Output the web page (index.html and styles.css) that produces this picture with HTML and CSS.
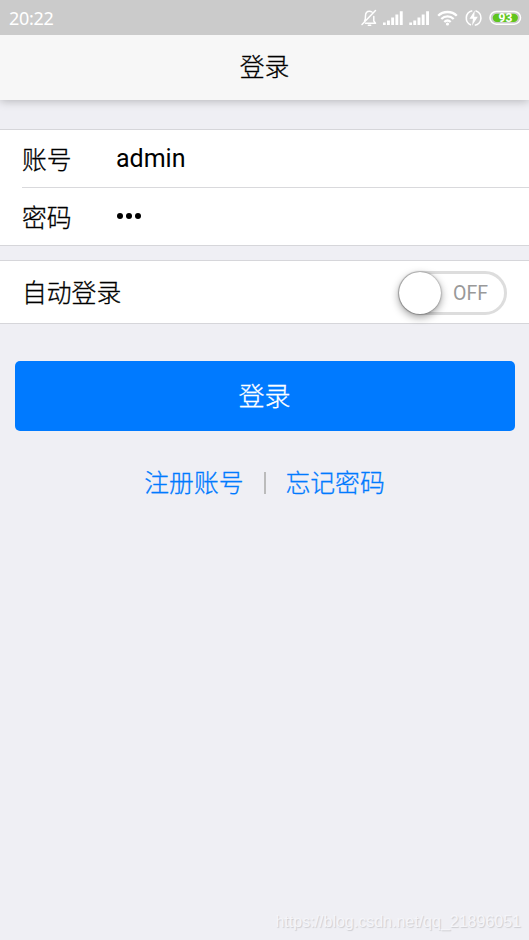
FILE: index.html
```html
<!DOCTYPE html>
<html lang="zh-CN">
<head>
<meta charset="utf-8">
<title>登录</title>
<link rel="stylesheet" href="styles.css">
</head>
<body>
<div class="status">
  <span class="time">20:22</span>
  <svg class="status-icons" width="165" height="24" viewBox="0 0 165 24" fill="none" stroke="#fff">
    <g stroke-width="1.5" stroke-linecap="round" stroke-linejoin="round">
      <path d="M5.500 17.300H15.500L13.800 15V10.500M4.500 15c1-1.200 1-2.500 1-5 0-3 1.200-4.800 3.900-4.800 1 0 1.800.300 2.500.800M8.300 19.300h2.400M2 18.500L15.500 4.500"/>
    </g>
    <g fill="#fff" stroke="none">
      <path id="signal" d="M23 16.500h2.700V19H23zM27 14.500h2.900V19H27zM31.200 11.500h2.900V19h-2.900zM35.400 8.500h2.900V19h-2.900zM39.800 5.300h2.900V19h-2.900z"/>
      <use href="#signal" x="26.300"/>
    </g>
    <g stroke-width="2.300">
      <path d="M78.200 9.800c5-5.100 13.600-5.100 18.600 0M81.300 13c3.500-3.500 8.900-3.500 12.400 0M84.300 16c1.900-1.800 4.500-1.800 6.400 0"/>
    </g>
    <circle cx="87.500" cy="18" r="1.600" fill="#fff" stroke="none"/>
    <path stroke-width="1.600" d="M112.300 4.700A7.500 7.500 0 0 0 111 19M115.500 4.700A7.500 7.500 0 0 1 114.800 19.300"/>
    <path fill="#fff" stroke="none" d="M114.800 4.500l-5.300 8.300h3.500L112 19.800l5.800-9h-3.600z"/>
    <rect x="130" y="5.400" width="30.500" height="12.800" rx="6.400" stroke-width="1.500"/>
    <rect x="132.700" y="7.700" width="25.200" height="8.300" rx="4.150" fill="#5fc51e" stroke="none"/>
    <text class="battery" x="145.400" y="16" text-anchor="middle">93</text>
  </svg>
</div>
<header class="bar">登录</header>
<main>
  <section class="card">
    <div class="row"><label>账号</label><span class="value">admin</span></div>
    <div class="row"><label>密码</label><span class="value dots"><i></i><i></i><i></i></span></div>
  </section>
  <section class="card toggle-card">
    <label>自动登录</label>
    <div class="switch"><span class="knob"></span><span class="off">OFF</span></div>
  </section>
  <button class="login">登录</button>
  <nav class="links"><a>注册账号</a><span class="divider"></span><a>忘记密码</a></nav>
</main>
<footer class="watermark">https://blog.csdn.net/qq_21896051</footer>
</body>
</html>
```
FILE: styles.css
```css
* { box-sizing: border-box; }
body {
  margin: 0;
  height: 940px;
  display: flex;
  flex-direction: column;
  overflow: hidden;
  background: #efeff4;
  color: #000;
  font-family: Roboto, "Noto Sans CJK SC", sans-serif;
  font-size: 24.800px;
  font-weight: 300;
  -webkit-text-stroke: .3px currentColor;
}
.status {
  height: 35px;
  flex: none;
  background: #cbcbcb;
  color: #fff;
  display: flex;
  align-items: center;
  justify-content: space-between;
  padding: 0 5px 0 9px;
  -webkit-text-stroke: 0;
}
.time { font-size: 18px; font-weight: 400; font-family: "Noto Sans", sans-serif; letter-spacing: -0.300px; }
.status-icons { margin-right: -1px; }
.battery { font: 700 12px Roboto, sans-serif; fill: #fff; stroke: none; }
.bar {
  height: 65px;
  flex: none;
  background: #f7f7f7;
  text-align: center;
  line-height: 66px;
  box-shadow: 0 1px 9px rgba(0, 0, 0, .25);
  clip-path: inset(0 0 -16px 0);
}
main { flex: 1; padding-top: 29px; }
.card { background: #fff; border: solid #d6d6da; border-width: 1px 0; height: 117px; }
.row { display: flex; align-items: center; height: 57px; margin-left: 22px; }
.row + .row { border-top: 1px solid #d9d9dc; height: 58px; }
.row label { width: 94px; padding-bottom: 2px; }
.value { font-weight: 400; font-size: 25px; padding-bottom: 1px; -webkit-text-stroke: 0; }
.dots { display: flex; gap: 3px; padding: 0 0 2px 1px; }
.dots i { width: 6px; height: 6px; border-radius: 50%; background: #000; }
.toggle-card {
  height: 64px;
  margin-top: 14px;
  padding: 0 22px 0 22px;
  display: flex;
  align-items: center;
  justify-content: space-between;
}
.toggle-card label { padding-bottom: 3px; }
.switch {
  width: 109px;
  height: 44px;
  border: 3px solid #ddd;
  border-radius: 22px;
  display: flex;
  align-items: center;
  margin-top: 2px;
}
.knob {
  width: 42px;
  height: 42px;
  flex: none;
  margin-left: -2px;
  border-radius: 50%;
  background: #fff;
  box-shadow: 0 3px 8px rgba(0, 0, 0, .4), 0 0 2px rgba(0, 0, 0, .5);
}
.off { color: #999; font-size: 19.500px; font-weight: 400; margin-left: 12px; -webkit-text-stroke: 0; }
.login {
  display: block;
  width: 500px;
  height: 70px;
  margin: 37px auto 0;
  padding: 0 0 4px;
  border: 0;
  border-radius: 5px;
  background: #007aff;
  color: #fff;
  font: inherit;
  font-size: 26px;
  -webkit-text-stroke: .3px currentColor;
}
.links { display: flex; justify-content: center; align-items: center; margin-top: 32px; color: #007aff; }
.divider { width: 2px; height: 22px; margin: 3px 20px 0; background: #bbb; }
.watermark {
  height: 37px;
  padding-right: 8px;
  text-align: right;
  font: 16px/37px "Liberation Sans", sans-serif;
  color: #f5f5f9;
  text-shadow: 1px 1px 1px #cdcdd1;
  -webkit-text-stroke: 0;
}
```
